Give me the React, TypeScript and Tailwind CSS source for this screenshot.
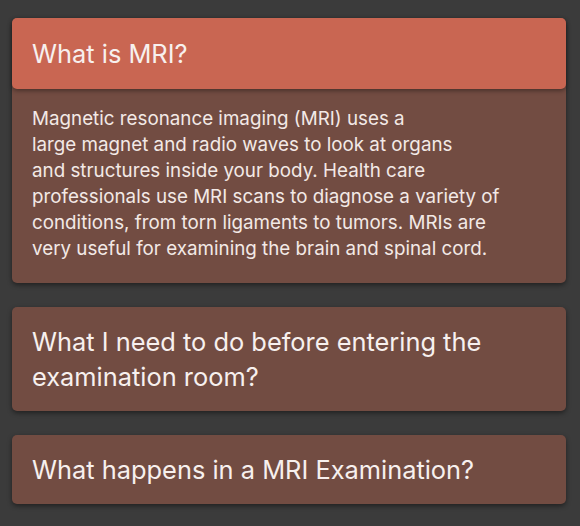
import React from 'react';

const font = { fontFamily: '"Inter", "Open Sans", sans-serif' };

type Item = { q: string; a?: React.ReactNode; open?: boolean };

const items: Item[] = [
  {
    q: 'What is MRI?',
    open: true,
    a: (
      <>
        Magnetic resonance imaging (MRI) uses a
        <br />
        large magnet and radio waves to look at organs
        <br />
        and structures inside your body. Health care
        <br />
        professionals use MRI scans to diagnose a variety of
        <br />
        conditions, from torn ligaments to tumors. MRIs are
        <br />
        very useful for examining the brain and spinal cord.
      </>
    ),
  },
  { q: 'What I need to do before entering the examination room?' },
  { q: 'What happens in a MRI Examination?' },
];

export default function App() {
  return (
    <div className="min-h-[526px] w-[580px] bg-[#3b3b3b] pt-[18px] pb-6 pl-3 pr-[14px]" style={font}>
      <div className="flex flex-col gap-[24px]">
        {items.map((it) => (
          <div
            key={it.q}
            className="rounded-[5px] bg-[#724c42] shadow-[0_2px_5px_rgba(0,0,0,0.45)]"
          >
            <div
              className={`rounded-[5px] px-5 pr-12 text-[25.4px] leading-[35px] text-[#f7f0ee] ${
                it.open ? 'bg-[#c96652] py-[18px] shadow-[0_2px_4px_rgba(0,0,0,0.35)]' : 'py-[17px]'
              }`}
            >
              {it.q}
            </div>
            {it.open && (
              <div className="px-5 pt-[17px] pb-[21px] text-[18.8px] leading-[26px] text-[#f3e9e6]">
                {it.a}
              </div>
            )}
          </div>
        ))}
      </div>
    </div>
  );
}
